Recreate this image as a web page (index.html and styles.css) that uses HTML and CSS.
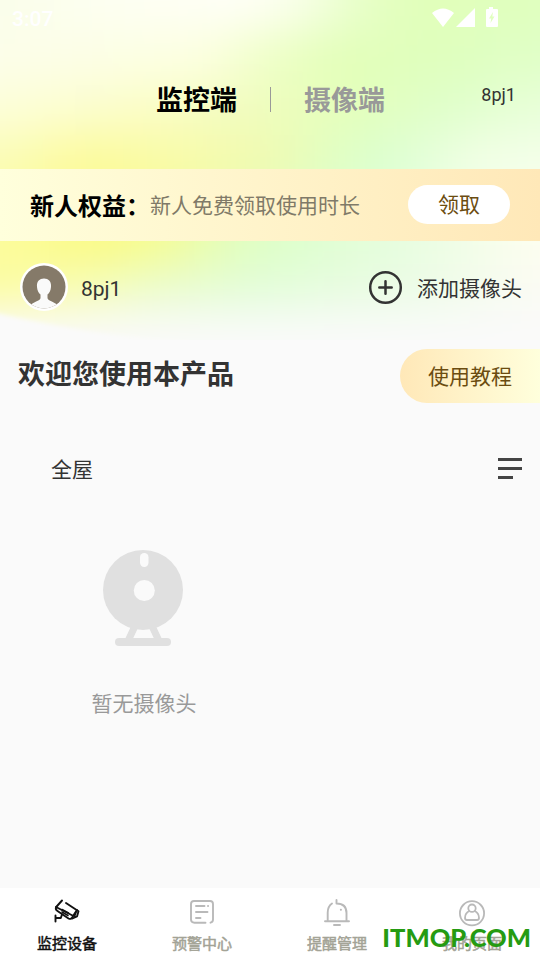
FILE: index.html
```html
<!DOCTYPE html>
<html lang="zh-CN">
<head>
<meta charset="utf-8">
<title>监控端</title>
<link rel="stylesheet" href="styles.css">
</head>
<body>
<div class="app">
  <div class="hero">
    <svg class="aurora" width="540" height="340" viewBox="0 0 540 340">
      <defs>
        <filter id="soft" filterUnits="userSpaceOnUse" x="-60" y="-80" width="660" height="500" color-interpolation-filters="sRGB"><feGaussianBlur stdDeviation="22"/></filter>
        <filter id="edge"><feGaussianBlur stdDeviation="2"/></filter>
        <linearGradient id="r1" gradientUnits="userSpaceOnUse" x1="0" y1="0" x2="540" y2="0"><stop offset="0" stop-color="#fafeea"/><stop offset=".2" stop-color="#fdfff2"/><stop offset=".46" stop-color="#fffff7"/><stop offset=".56" stop-color="#f8ffe8"/><stop offset=".65" stop-color="#e9ffcc"/><stop offset=".76" stop-color="#e1ffba"/><stop offset="1" stop-color="#e0ffbe"/></linearGradient>
        <linearGradient id="r2" gradientUnits="userSpaceOnUse" x1="0" y1="0" x2="540" y2="0"><stop offset="0" stop-color="#fcfeea"/><stop offset=".38" stop-color="#fcffe0"/><stop offset=".48" stop-color="#f0ffca"/><stop offset=".62" stop-color="#e3ffb9"/><stop offset=".84" stop-color="#dfffbe"/><stop offset="1" stop-color="#e0ffc8"/></linearGradient>
        <linearGradient id="r3" gradientUnits="userSpaceOnUse" x1="0" y1="0" x2="540" y2="0"><stop offset="0" stop-color="#fcfed8"/><stop offset=".28" stop-color="#fbfdc5"/><stop offset=".47" stop-color="#f0fcbd"/><stop offset=".65" stop-color="#e4ffbb"/><stop offset=".82" stop-color="#dfffcb"/><stop offset="1" stop-color="#e9ffda"/></linearGradient>
        <linearGradient id="r4" gradientUnits="userSpaceOnUse" x1="0" y1="0" x2="540" y2="0"><stop offset="0" stop-color="#fbfcb6"/><stop offset=".16" stop-color="#fcfb9a"/><stop offset=".34" stop-color="#f8fba8"/><stop offset=".5" stop-color="#effbb2"/><stop offset=".63" stop-color="#dfffc6"/><stop offset=".72" stop-color="#dbffd2"/><stop offset=".88" stop-color="#f2ffe6"/><stop offset="1" stop-color="#f4ffea"/></linearGradient>
        <linearGradient id="r5" gradientUnits="userSpaceOnUse" x1="0" y1="0" x2="540" y2="0"><stop offset="0" stop-color="#fcfc9c"/><stop offset=".18" stop-color="#fbfb83"/><stop offset=".31" stop-color="#f4fc96"/><stop offset=".41" stop-color="#e4fdb8"/><stop offset=".52" stop-color="#dcffca"/><stop offset=".74" stop-color="#e6fddf"/><stop offset="1" stop-color="#fefef0"/></linearGradient>
        <linearGradient id="r6" gradientUnits="userSpaceOnUse" x1="0" y1="0" x2="540" y2="0"><stop offset="0" stop-color="#fcfca2"/><stop offset=".15" stop-color="#f7fcb4"/><stop offset=".28" stop-color="#ebfcce"/><stop offset=".46" stop-color="#e2fdd8"/><stop offset=".74" stop-color="#eafce4"/><stop offset="1" stop-color="#fbfbf4"/></linearGradient>
      </defs>
      <g filter="url(#soft)">
        <path fill="url(#r1)" d="M-80-80h700V30H-80z"/>
        <path fill="url(#r2)" d="M-80 30h700v55H-80z"/>
        <path fill="url(#r3)" d="M-80 85h700v50H-80z"/>
        <path fill="url(#r4)" d="M-80 135h700v60H-80z"/>
        <path fill="url(#r5)" d="M-80 195h700v70H-80z"/>
        <path fill="url(#r6)" d="M-80 265h700v45H-80z"/>
        <path fill="#fafafa" d="M-80 310h700v150H-80z"/>
      </g>
      <path fill="#fafafa" filter="url(#edge)" d="M-20 310C40 322 100 338 200 343L200 360H-20z"/>
    </svg>
    <header class="status">
      <span class="time">3:07</span>
      <svg width="68" height="22" viewBox="0 0 68 22" fill="#fff">
        <path d="M0 5Q11-4 22 5L11 19Z"/>
        <path d="M43 0V19H24Z"/>
        <path fill-rule="evenodd" d="M57-1h4v2h4q1 0 1 1V18q0 1-1 1H55q-1 0-1-1V2q0-1 1-1h2ZM61 4l-4 6.500h2.200L58.500 15l4-6.500H60.300Z"/>
      </svg>
    </header>
    <nav class="modes">
      <span class="mode active">监控端</span>
      <i class="divider"></i>
      <span class="mode">摄像端</span>
      <span class="account">8pj1</span>
    </nav>
    <section class="promo">
      <strong>新人权益：</strong>
      <span class="promo-text">新人免费领取使用时长</span>
      <span class="claim">领取</span>
    </section>
    <section class="user">
      <svg class="avatar" width="48" height="48" viewBox="0 0 48 48">
        <defs><clipPath id="face"><circle cx="24" cy="24" r="21.500"/></clipPath></defs>
        <circle cx="24" cy="24" r="24" fill="#fff"/>
        <g clip-path="url(#face)">
          <path fill="#857a69" d="M0 0h48v48H0z"/>
          <path fill="#fafafa" d="M24 15.500c-5 0-7.500 3.500-7 8.500.3 3.500 1.500 6 3.500 7.500v3.500c0 3-8 3.500-11 8.500v5h29v-5c-3-5-11-5.500-11-8.500v-3.500c2-1.500 3.200-4 3.500-7.500.5-5-2-8.500-7-8.500z"/>
        </g>
      </svg>
      <span class="name">8pj1</span>
      <svg class="plus" width="33" height="34" viewBox="0 0 33 34" fill="none" stroke="#333" stroke-width="2.500" stroke-linecap="round">
        <circle cx="16.500" cy="17.500" r="15.300"/>
        <path d="M16.500 11.300v12.400M10.300 17.500h12.400"/>
      </svg>
      <span class="add">添加摄像头</span>
    </section>
  </div>
  <section class="welcome">
    <h1>欢迎您使用本产品</h1>
    <span class="guide">使用教程</span>
  </section>
  <section class="room">
    <span>全屋</span>
    <svg width="24" height="21" viewBox="0 0 24 21" fill="#444"><path d="M0 0h24v3H0zM0 9h24v3H0zM0 18h15v3H0z"/></svg>
  </section>
  <section class="empty">
    <svg width="82" height="97" viewBox="0 0 82 97">
      <circle cx="40" cy="40" r="40" fill="#e0e0e0"/>
      <path d="M32 76l-7 15M49 76l7 15" stroke="#e0e0e0" stroke-width="7" fill="none"/>
      <rect x="12" y="88" width="56" height="8" rx="4" fill="#e0e0e0"/>
      <rect x="37" y="3" width="8.500" height="14" rx="4.200" fill="#fafafa"/>
      <circle cx="41.300" cy="40.500" r="10.500" fill="#fafafa"/>
    </svg>
    <span>暂无摄像头</span>
  </section>
  <nav class="tabs">
    <div class="tab current">
      <svg width="28" height="28" viewBox="0 0 28 28" fill="none" stroke="#111" stroke-width="1.900" stroke-linecap="round" stroke-linejoin="round">
        <path d="M9 2.500L3.200 9Q2 11.500 4.500 13L15.500 20.500Q18.500 22 20 18L24 12"/>
        <path d="M13 5L25.500 13.300 24 18.500 19.500 20.500M3 9L19.500 17.500M23 14L21 19.500"/>
        <path d="M9 11.500l6.500 3.500M9 14l6 3.500" stroke-width="1.500"/>
        <path d="M9 16.500L7.800 20H2.500M2.500 17.500V23.500"/>
      </svg>
      <span>监控设备</span>
    </div>
    <div class="tab">
      <svg width="28" height="28" viewBox="0 0 28 28" fill="none" stroke="#b9b9b9" stroke-width="1.900" stroke-linecap="round">
        <path d="M17.500 24.700H6.500Q3 24.700 3 21.500V6Q3 3 6 3H22Q25 3 25 6V21.500Q25 24 22.500 24.700"/>
        <path d="M8 8h8.500M20 8h.1M8 14h11.500M8 20h4.500"/>
      </svg>
      <span>预警中心</span>
    </div>
    <div class="tab">
      <svg width="28" height="28" viewBox="0 0 28 28" fill="none" stroke="#b9b9b9" stroke-width="1.900" stroke-linecap="round" stroke-linejoin="round">
        <path d="M2 23.300H26M4.700 23V14.500Q4.700 8.500 9 5.500M13.500 2V5.500C20 5.500 23.500 9 23.500 15V23"/>
        <path d="M11 27h6M17.800 11.800h.2"/>
      </svg>
      <span>提醒管理</span>
    </div>
    <div class="tab">
      <svg width="28" height="28" viewBox="0 0 28 28" fill="none" stroke="#b9b9b9" stroke-width="1.800" stroke-linejoin="round">
        <circle cx="14" cy="15.300" r="12.100"/>
        <circle cx="14" cy="10.200" r="3.700"/>
        <path d="M11.500 13C8 14.500 7 17 7 20Q7 22 9 22H19Q21 22 21 20C21 17 20 14.500 16.500 13"/>
      </svg>
      <span>我的页面</span>
    </div>
    <div class="brand">ITMOP.COM</div>
  </nav>
</div>
</body>
</html>
```
FILE: styles.css
```css
* { box-sizing: border-box; }
body {
  margin: 0;
  background: #fafafa;
  color: #333;
  font-family: Roboto, "Noto Sans CJK SC", sans-serif;
  font-size: 21px;
}
.app {
  display: flex;
  flex-direction: column;
  width: 540px;
  height: 960px;
  overflow: hidden;
}
svg { display: block; flex: none; overflow: visible; }
.hero {
  position: relative;
  z-index: 0;
  height: 340px;
  flex: none;
}
.aurora {
  position: absolute;
  z-index: -1;
  inset: 0;
  overflow: hidden;
}
.status {
  display: flex;
  justify-content: space-between;
  height: 40px;
  padding: 8px 40px 0 12px;
  color: #fff;
}
.time { font-size: 21px; line-height: 23px; font-weight: 500; }
.modes {
  display: flex;
  align-items: center;
  height: 129px;
  padding: 0 24px 11px 156px;
}
.mode { margin-top: -1px; font-size: 27px; font-weight: 700; color: #999; }
.mode.active { color: #000; }
.divider { width: 1px; height: 25px; margin: 0 33px; background: #999; }
.account { margin: -9px 0 0 auto; font-size: 18px; }
.promo {
  display: flex;
  align-items: center;
  height: 72px;
  padding: 0 30px 2px;
  background: linear-gradient(90deg, #ffffdc, #ffe8b8);
}
.promo strong { width: 120px; color: #000; font-size: 24px; white-space: nowrap; }
.promo-text { color: #807a68; }
.claim {
  width: 102px;
  height: 39px;
  margin-left: auto;
  border-radius: 20px;
  background: #fff;
  color: #6b4c10;
  line-height: 41px;
  text-align: center;
}
.user {
  display: flex;
  align-items: center;
  height: 93px;
  padding: 0 18px 1px 20px;
}
.name { margin-left: 13px; padding-top: 3px; }
.plus { margin-left: auto; }
.add { margin-left: 15px; }
.welcome {
  display: flex;
  justify-content: space-between;
  height: 72px;
  padding: 9px 0 0 18px;
}
h1 { margin: 6px 0 0; font-size: 27px; line-height: 40px; }
.guide {
  width: 140px;
  height: 54px;
  padding-left: 28px;
  border-radius: 27px 0 0 27px;
  background: linear-gradient(90deg, #ffe8b8, #ffffdc);
  color: #6b4c10;
  line-height: 56px;
}
.room {
  display: flex;
  align-items: center;
  justify-content: space-between;
  height: 112px;
  padding: 0 18px 0 51px;
}
.empty {
  display: flex;
  flex: 1;
  flex-direction: column;
  align-items: center;
  gap: 40px;
  width: 288px;
  padding-top: 26px;
  color: #999;
}
.tabs {
  position: relative;
  display: flex;
  height: 72px;
  background: #fff;
}
.tab {
  display: flex;
  flex: 1;
  flex-direction: column;
  align-items: center;
  gap: 7px;
  padding: 10px 1px 0 0;
  color: #a3a396;
  font-size: 15px;
  -webkit-text-stroke: .5px currentColor;
  line-height: 22px;
}
.tab.current { color: #111; }
.brand {
  position: absolute;
  top: 31px;
  right: 9px;
  color: #259b12;
  font: 900 25.500px/36px Lato, sans-serif;
}
```
